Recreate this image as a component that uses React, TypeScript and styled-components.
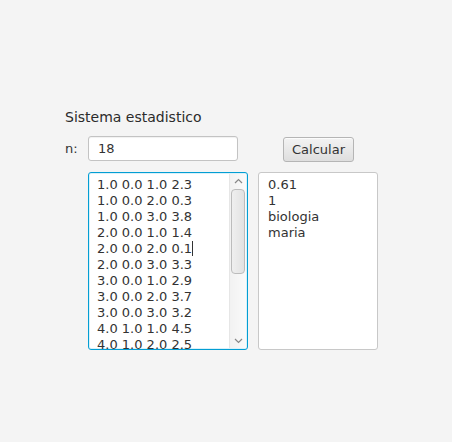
import React from "react";
import styled, { createGlobalStyle } from "styled-components";

const Global = createGlobalStyle`
  html, body { margin: 0; padding: 0; background: #f4f4f4; }
  body { font-family: "DejaVu Sans", "Liberation Sans", sans-serif; font-size: 13px; color: #333; }
`;

const Page = styled.div`
  width: 452px;
  height: 442px;
  box-sizing: border-box;
  padding: 107px 0 0 65px;
  display: flex;
  flex-direction: column;
`;

const Title = styled.div`
  height: 20px;
  line-height: 20px;
  font-size: 14px;
  color: #2b2b2b;
  margin-bottom: 9px;
`;

const Row = styled.div`
  display: flex;
  align-items: center;
  height: 25px;
`;

const Label = styled.span`
  width: 23px;
  color: #333;
`;

const TextField = styled.div`
  box-sizing: border-box;
  width: 150px;
  height: 25px;
  background: #fff;
  border: 1px solid #c3c3c3;
  border-radius: 3px;
  box-shadow: inset 0 1px 1px rgba(0, 0, 0, 0.06);
  padding: 0 9px;
  line-height: 23px;
  color: #333;
`;

const Button = styled.div`
  box-sizing: border-box;
  width: 71px;
  height: 25px;
  margin-left: 45px;
  margin-top: 1px;
  border: 1px solid #b5b5b5;
  border-radius: 3px;
  background: linear-gradient(#f3f3f3, #dedede);
  box-shadow: inset 0 1px 0 rgba(255, 255, 255, 0.7);
  display: flex;
  align-items: center;
  justify-content: center;
  color: #333;
`;

const Areas = styled.div`
  display: flex;
  gap: 10px;
  margin-left: 23px;
  margin-top: 11px;
`;

const Area = styled.div<{ $w: number; $focused?: boolean }>`
  box-sizing: border-box;
  width: ${(p) => p.$w}px;
  height: 178px;
  background: #fff;
  border: 1px solid ${(p) => (p.$focused ? "#039ed3" : "#c8c8c8")};
  border-radius: 3px;
  box-shadow: ${(p) => (p.$focused ? "inset 0 0 0 1px #d9f1fa" : "none")};
  display: flex;
  overflow: hidden;
`;

const Content = styled.div<{ $pl: number }>`
  flex: 1;
  padding: 4px 0 0 ${(p) => p.$pl}px;
  line-height: 16px;
  white-space: pre;
  overflow: hidden;
  color: #333;
`;

const Caret = styled.span`
  display: inline-block;
  width: 1px;
  height: 15px;
  background: #333;
  vertical-align: -3px;
`;

const ScrollBar = styled.div`
  width: 16px;
  margin: 1px 1px 1px 0;
  border-left: 1px solid #e6e6e6;
  background: linear-gradient(90deg, #f2f2f2, #fafafa);
  display: flex;
  flex-direction: column;
  align-items: center;
`;

const Arrow = styled.div`
  height: 14px;
  display: flex;
  align-items: center;
  justify-content: center;
`;

const Track = styled.div`
  flex: 1;
  width: 100%;
  position: relative;
`;

const Thumb = styled.div`
  position: absolute;
  left: 1px;
  right: 1px;
  top: 1px;
  height: 85px;
  box-sizing: border-box;
  border: 1px solid #bcbcbc;
  border-radius: 4px;
  background: linear-gradient(90deg, #efefef, #e2e2e2);
`;

const lines = [
  "1.0 0.0 1.0 2.3",
  "1.0 0.0 2.0 0.3",
  "1.0 0.0 3.0 3.8",
  "2.0 0.0 1.0 1.4",
  "2.0 0.0 2.0 0.1",
  "2.0 0.0 3.0 3.3",
  "3.0 0.0 1.0 2.9",
  "3.0 0.0 2.0 3.7",
  "3.0 0.0 3.0 3.2",
  "4.0 1.0 1.0 4.5",
  "4.0 1.0 2.0 2.5",
];

export default function App() {
  return (
    <>
      <Global />
      <Page>
        <Title>Sistema estadistico</Title>
        <Row>
          <Label>n:</Label>
          <TextField>18</TextField>
          <Button>Calcular</Button>
        </Row>
        <Areas>
          <Area $w={160} $focused>
            <Content $pl={8}>
              {lines.map((l, i) => (
                <div key={i}>
                  {l}
                  {i === 4 && <Caret />}
                </div>
              ))}
            </Content>
            <ScrollBar>
              <Arrow>
                <svg width="9" height="6" viewBox="0 0 9 6">
                  <path d="M1 5 L4.5 1.5 L8 5" fill="none" stroke="#888" strokeWidth="1.2" />
                </svg>
              </Arrow>
              <Track>
                <Thumb />
              </Track>
              <Arrow>
                <svg width="9" height="6" viewBox="0 0 9 6">
                  <path d="M1 1 L4.5 4.5 L8 1" fill="none" stroke="#888" strokeWidth="1.2" />
                </svg>
              </Arrow>
            </ScrollBar>
          </Area>
          <Area $w={120}>
            <Content $pl={9}>
              <div>0.61</div>
              <div>1</div>
              <div>biologia</div>
              <div>maria</div>
            </Content>
          </Area>
        </Areas>
      </Page>
    </>
  );
}
